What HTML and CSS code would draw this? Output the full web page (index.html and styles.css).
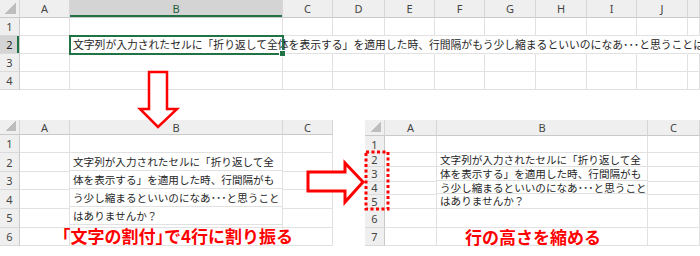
FILE: index.html
```html
<!DOCTYPE html>
<html lang="ja">
<head>
    <meta charset="UTF-8">
    <meta name="viewport" content="width=device-width, initial-scale=1.0">
    <title>折り返して全体を表示する</title>
    <link rel="stylesheet" href="styles.css">
</head>
<body>
<div class="page">

    <!-- before: one long line in B2 -->
    <table class="sheet sheet-top">
        <colgroup>
            <col class="w20"><col class="w50"><col class="w213"><col class="w50"><col class="w52"><col class="w50">
            <col class="w50"><col class="w51"><col class="w51"><col class="w50"><col class="w51"><col class="w12">
        </colgroup>
        <thead>
            <tr>
                <th class="corner"></th>
                <th>A</th><th class="sel-col">B</th><th>C</th><th>D</th><th>E</th>
                <th>F</th><th>G</th><th>H</th><th>I</th><th>J</th><th></th>
            </tr>
        </thead>
        <tbody>
            <tr><th>1</th><td></td><td></td><td></td><td></td><td></td><td></td><td></td><td></td><td></td><td></td><td></td></tr>
            <tr>
                <th class="sel-row">2</th><td></td>
                <td class="sel">文字列が入力されたセルに「折り返して全体を表示する」を適用した時、行間隔がもう少し縮まるといいのになあ･･･と思うことはありませんか？</td>
                <td class="spill"></td><td class="spill"></td><td class="spill"></td><td class="spill"></td>
                <td class="spill"></td><td class="spill"></td><td class="spill"></td><td class="spill"></td><td class="spill"></td>
            </tr>
            <tr><th>3</th><td></td><td></td><td></td><td></td><td></td><td></td><td></td><td></td><td></td><td></td><td></td></tr>
            <tr><th>4</th><td></td><td></td><td></td><td></td><td></td><td></td><td></td><td></td><td></td><td></td><td></td></tr>
        </tbody>
    </table>

    <div class="lower">
        <!-- wrapped over 4 rows -->
        <table class="sheet sheet-left">
            <colgroup><col class="w20"><col class="w50"><col class="w213"><col class="w50"></colgroup>
            <thead>
                <tr><th class="corner"></th><th>A</th><th>B</th><th>C</th></tr>
            </thead>
            <tbody>
                <tr><th>1</th><td></td><td></td><td></td></tr>
                <tr>
                    <th>2</th><td></td>
                    <td class="wrap" rowspan="4">文字列が入力されたセルに「折り返して全<br>体を表示する」を適用した時、行間隔がも<br>う少し縮まるといいのになあ･･･と思うこと<br>はありませんか？</td>
                    <td></td>
                </tr>
                <tr><th>3</th><td></td><td></td></tr>
                <tr><th>4</th><td></td><td></td></tr>
                <tr><th>5</th><td></td><td></td></tr>
                <tr><th>6</th><td></td><td></td><td></td></tr>
            </tbody>
        </table>

        <!-- rows squeezed -->
        <table class="sheet sheet-right">
            <colgroup><col class="w20"><col class="w52"><col class="w211"><col class="w52"></colgroup>
            <thead>
                <tr><th class="corner"></th><th>A</th><th>B</th><th>C</th></tr>
            </thead>
            <tbody>
                <tr class="h17"><th>1</th><td></td><td></td><td></td></tr>
                <tr class="h14">
                    <th>2</th><td></td>
                    <td class="wrap" rowspan="4">文字列が入力されたセルに「折り返して全<br>体を表示する」を適用した時、行間隔がも<br>う少し縮まるといいのになあ･･･と思うこと<br>はありませんか？</td>
                    <td></td>
                </tr>
                <tr class="h14"><th>3</th><td></td><td></td></tr>
                <tr class="h13"><th>4</th><td></td><td></td></tr>
                <tr class="h14"><th>5</th><td></td><td></td></tr>
                <tr class="h19"><th>6</th><td></td><td></td><td></td></tr>
                <tr class="h18"><th>7</th><td></td><td></td><td></td></tr>
            </tbody>
        </table>
    </div>

    <!-- annotations -->
    <svg class="arrow-down" width="46" height="64" viewBox="0 0 46 64">
        <polygon points="13,4 31,4 31,41 41,41 22,59 4,41 13,41" />
    </svg>
    <svg class="arrow-right" width="64" height="48" viewBox="0 0 64 48">
        <polygon points="4,14 41,14 41,5 59,24 41,44 41,33 4,33" />
    </svg>
    <svg class="dots" width="30" height="66" viewBox="0 0 30 66">
        <rect x="4" y="4" width="22" height="57" />
    </svg>

    <div class="label label-left"><span class="half">「</span>文字の割付<span class="half">」</span>で4行に割り振る</div>
    <div class="label label-right">行の高さを縮める</div>
</div>
</body>
</html>
```

FILE: styles.css
```css
body {
    margin: 0;
    background: #fff;
    font-family: "Noto Sans CJK JP", "Noto Sans", sans-serif;
}

.page {
    position: relative;
    width: 700px;
    height: 256px;
    overflow: hidden;
}

/* sheet grid */
.sheet {
    border-collapse: separate;
    border-spacing: 0;
    table-layout: fixed;
}

.sheet-top { width: 700px; }
.sheet-left { width: 333px; }
.sheet-right { width: 335px; }

.w12 { width: 12px; }
.w20 { width: 20px; }
.w50 { width: 50px; }
.w51 { width: 51px; }
.w52 { width: 52px; }
.w211 { width: 211px; }
.w213 { width: 213px; }

.sheet tr { height: 18px; }
.sheet-left thead tr { height: 15px; }
.sheet-right thead tr { height: 16px; }
.sheet-right .h13 { height: 13px; }
.sheet-right .h14 { height: 14px; }
.sheet-right .h17 { height: 17px; }
.sheet-right .h18 { height: 18px; }
.sheet-right .h19 { height: 19px; }

.sheet th {
    padding: 0;
    background: #efefef;
    color: #444;
    font-family: "Noto Sans", "Liberation Sans", sans-serif;
    font-size: 11px;
    font-weight: normal;
    line-height: 1;
    text-align: center;
    border-right: 1px solid #d6d6d6;
    border-bottom: 1px solid #c9c9c9;
}

.sheet tbody th {
    border-right-color: #c9c9c9;
    border-bottom-color: #dadada;
}

.sheet td {
    padding: 0 3px;
    border-right: 1px solid #e1e1e1;
    border-bottom: 1px solid #e1e1e1;
    color: #262626;
    font-size: 10.6px;
    line-height: 1;
    white-space: nowrap;
}

.corner {
    position: relative;
}

.corner::after {
    content: "";
    position: absolute;
    right: 3px;
    bottom: 3px;
    width: 11px;
    height: 11px;
    background: linear-gradient(to bottom right, transparent 50%, #bdbdbd 50%);
}

/* selected cell B2 */
.sheet .sel-col {
    background: #d4d4d4;
    color: #1f5e3a;
    box-shadow: inset 0 -2px 0 #217346;
}

.sheet .sel-row {
    background: #d4d4d4;
    color: #222;
    box-shadow: inset -2px 0 0 #217346;
}

.sheet td.sel {
    position: relative;
    overflow: visible;
    font-size: 10.8px;
    outline: 2px solid #217346;
    outline-offset: -1px;
}

.sel::after {
    content: "";
    position: absolute;
    right: -4px;
    bottom: -4px;
    width: 5px;
    height: 5px;
    background: #217346;
    border: 1px solid #fff;
}

.sheet td.spill {
    border-right-color: transparent;
}

/* wrapped text over rows 2-5 */
.sheet td.wrap {
    vertical-align: top;
    line-height: 18px;
    background: repeating-linear-gradient(to bottom, transparent 0 17px, #e1e1e1 17px 18px);
}

.sheet-right td.wrap {
    line-height: 13.75px;
    background: linear-gradient(to bottom,
        transparent 0 13px, #e1e1e1 13px 14px,
        transparent 14px 27px, #e1e1e1 27px 28px,
        transparent 28px 40px, #e1e1e1 40px 41px,
        transparent 41px);
}

.lower {
    display: flex;
    gap: 32px;
    margin-top: 30px;
}

/* annotations */
.arrow-down,
.arrow-right,
.dots {
    position: absolute;
}

.arrow-down { left: 136px; top: 68px; }
.arrow-right { left: 304px; top: 158px; }
.dots { left: 362px; top: 148px; }

.arrow-down polygon,
.arrow-right polygon {
    fill: #fff;
    stroke: #f00;
    stroke-width: 2.5;
}

.arrow-right polygon { stroke-width: 3; }

.dots rect {
    fill: none;
    stroke: #f00;
    stroke-width: 3;
    stroke-dasharray: 3 2.5;
}

.label {
    position: absolute;
    color: #f00;
    font-size: 17px;
    font-weight: bold;
    line-height: 1;
    white-space: nowrap;
}

.label-left { left: 62px; top: 227px; }
.label-right { left: 465px; top: 228px; }

.half { font-feature-settings: "halt"; }
```
